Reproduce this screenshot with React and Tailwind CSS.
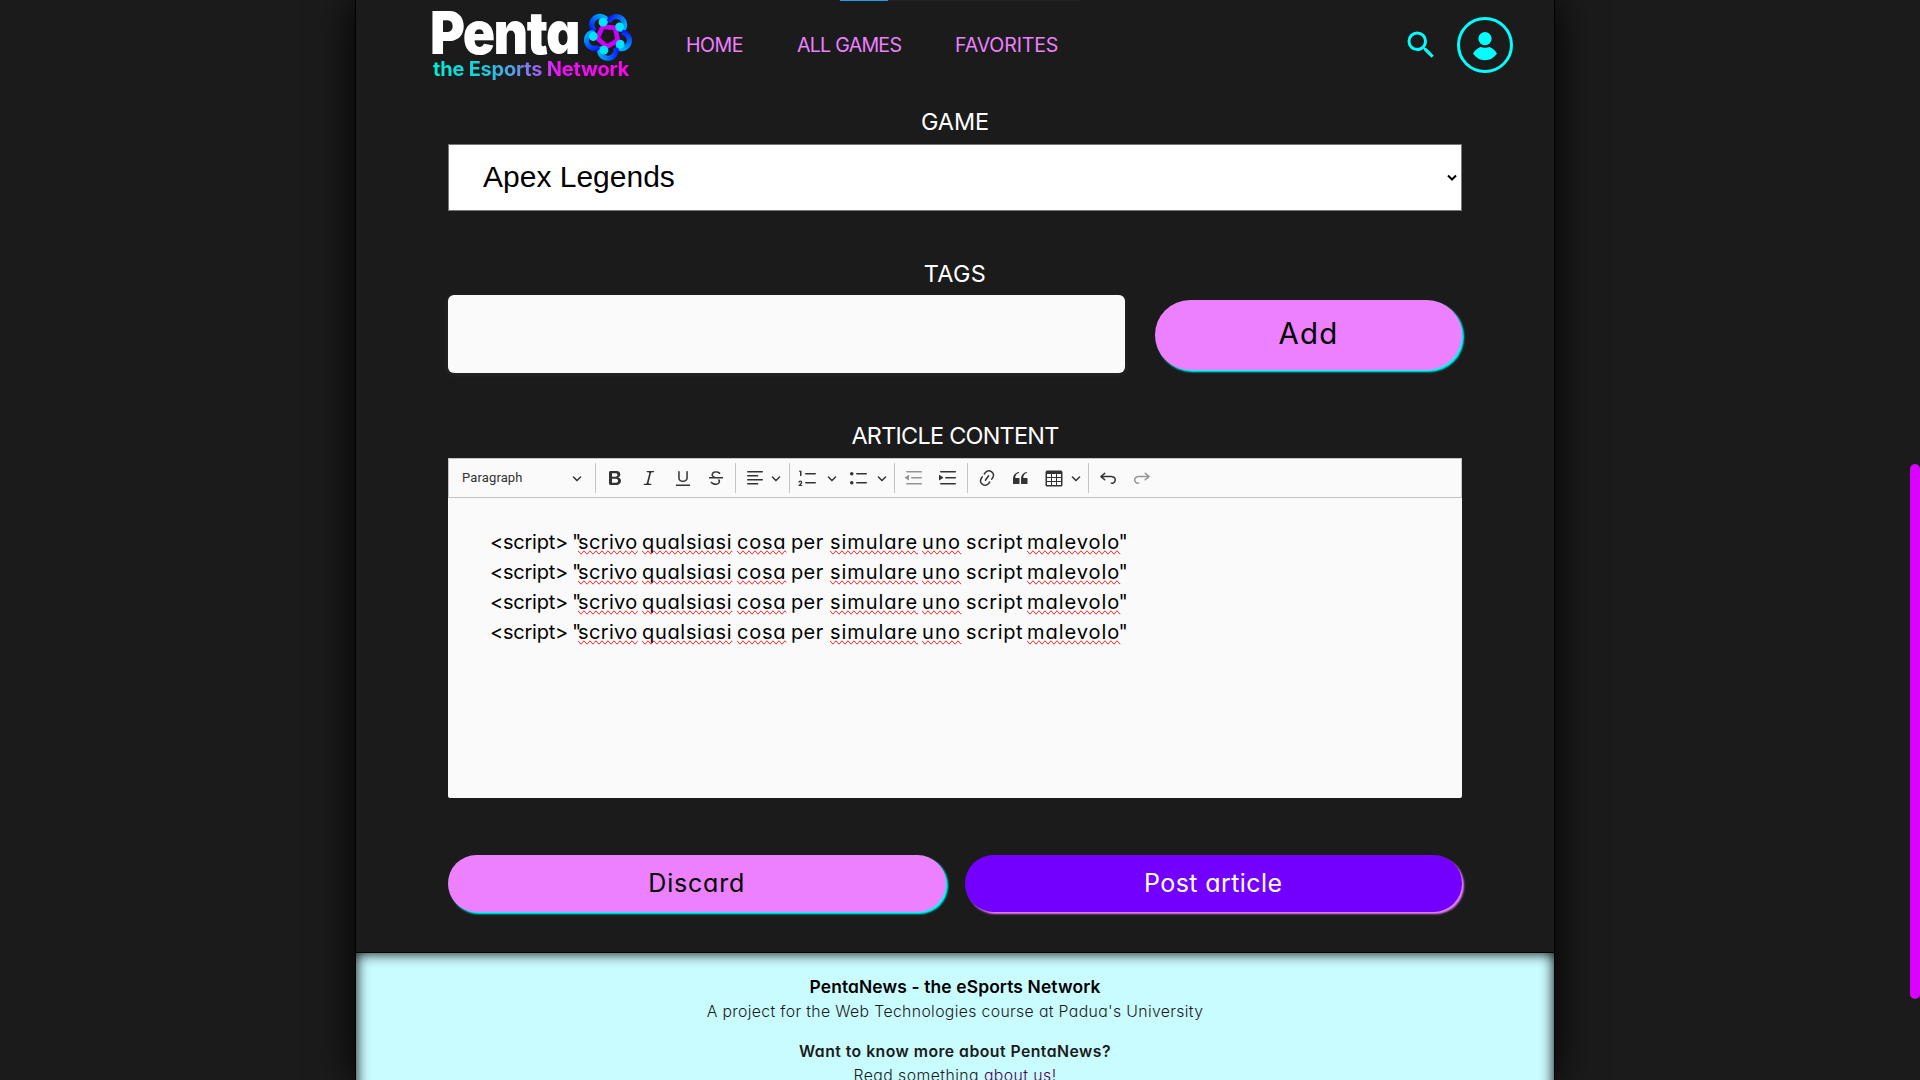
const ICONS = {
  bold: ["M10.187 17H5.773c-.637 0-1.092-.138-1.364-.415-.273-.277-.409-.718-.409-1.323V4.738c0-.617.14-1.062.419-1.332.279-.27.73-.406 1.354-.406h4.68c.69 0 1.288.041 1.793.124.506.083.96.242 1.36.477.341.197.644.447.906.75a3.262 3.262 0 0 1 .808 2.162c0 1.401-.722 2.426-2.167 3.075C15.05 10.175 16 11.315 16 13.01a3.756 3.756 0 0 1-2.296 3.504 6.1 6.1 0 0 1-1.517.377c-.571.073-1.238.11-2 .11zm-.217-6.217H7v4.087h3.069c1.977 0 2.965-.69 2.965-2.072 0-.707-.256-1.22-.768-1.537-.512-.319-1.277-.478-2.296-.478zM7 5.13v3.619h2.606c.729 0 1.292-.067 1.69-.2a1.6 1.6 0 0 0 .91-.765c.165-.267.247-.566.247-.897 0-.707-.26-1.176-.778-1.409-.519-.232-1.31-.348-2.375-.348H7z"],
  italic: ["m9.586 14.633.021.004c-.036.335.095.655.393.962.082.083.173.15.274.201h1.474a.6.6 0 1 1 0 1.2H5.304a.6.6 0 0 1 0-1.2h1.15c.474-.07.809-.182 1.005-.334.157-.122.291-.32.404-.597l2.416-9.55a1.053 1.053 0 0 0-.281-.823 1.12 1.12 0 0 0-.442-.296H8.15a.6.6 0 0 1 0-1.2h6.443a.6.6 0 1 1 0 1.2h-1.195c-.376.056-.65.155-.823.296-.215.175-.423.439-.623.79l-2.366 9.347z"],
  underline: ["M3 18v-1.5h14V18zm2.2-8V3.6c0-.4.4-.6.8-.6.3 0 .7.2.7.6v6.2c0 2 1.3 2.8 3.2 2.8 1.9 0 3.4-.9 3.4-2.9V3.6c0-.3.4-.5.8-.5.3 0 .7.2.7.5V10c0 2.7-2.2 4-4.9 4-2.6 0-4.7-1.2-4.7-4z"],
  strike: ["M7 16.4c-.8-.4-1.5-.9-2.2-1.5a.6.6 0 0 1-.2-.5l.3-.6h1c1 1.2 2.1 1.7 3.7 1.7 1 0 1.8-.3 2.3-.6.6-.4.6-1.2.6-1.3.2-1.2-.9-2.1-.9-2.1h2.1c.3.7.4 1.2.4 1.7v.8l-.6 1.2c-.6.8-1.1 1-1.6 1.2a6 6 0 0 1-2.4.6c-1 0-1.8-.3-2.5-.6zM6.8 9 6 8.3c-.4-.5-.5-.8-.5-1.6 0-.7.1-1.3.5-1.8.4-.6 1-1 1.6-1.3a6.3 6.3 0 0 1 4.7 0 4 4 0 0 1 1.7 1l.3.7c0 .1.2.4-.2.7-.4.2-.9.1-1 0a3 3 0 0 0-1.2-1c-.4-.2-1-.3-2-.4-.7 0-1.4.2-2 .6-.8.6-1 .8-1 1.5 0 .8.5 1 1.2 1.5.6.4 1.1.7 1.9 1H6.8z", "M3 10.5V9h14v1.5z"],
  align: ["M2 3.75c0 .414.336.75.75.75h14.5a.75.75 0 1 0 0-1.5H2.75a.75.75 0 0 0-.75.75zm0 8c0 .414.336.75.75.75h14.5a.75.75 0 1 0 0-1.5H2.75a.75.75 0 0 0-.75.75zm0 4c0 .414.336.75.75.75h9.929a.75.75 0 1 0 0-1.5H2.75a.75.75 0 0 0-.75.75zm0-8c0 .414.336.75.75.75h9.929a.75.75 0 1 0 0-1.5H2.75a.75.75 0 0 0-.75.75z"],
  numbered: ["M7 5.75c0 .414.336.75.75.75h9.5a.75.75 0 1 0 0-1.5h-9.5a.75.75 0 0 0-.75.75zM3.5 3v5H2V3.7H1v-1h2.5V3zM.343 17.857l2.59-3.257H2.92a.6.6 0 1 0-1.04 0H.302a2 2 0 1 1 3.995 0h-.001c-.048.405-.16.734-.333.988-.175.254-.59.692-1.244 1.312H4.3v1h-4l.043-.043zM7 14.75a.75.75 0 0 1 .75-.75h9.5a.75.75 0 1 1 0 1.5h-9.5a.75.75 0 0 1-.75-.75z"],
  bulleted: ["M7 5.75c0 .414.336.75.75.75h9.5a.75.75 0 1 0 0-1.5h-9.5a.75.75 0 0 0-.75.75zm-6 0C1 4.784 1.777 4 2.75 4c.966 0 1.75.777 1.75 1.75 0 .966-.777 1.75-1.75 1.75C1.784 7.5 1 6.723 1 5.75zm6 9c0 .414.336.75.75.75h9.5a.75.75 0 1 0 0-1.5h-9.5a.75.75 0 0 0-.75.75zm-6 0c0-.966.777-1.75 1.75-1.75.966 0 1.75.777 1.75 1.75 0 .966-.777 1.75-1.75 1.75-.966 0-1.75-.777-1.75-1.75z"],
  outdent: ["M2 3.75c0 .414.336.75.75.75h14.5a.75.75 0 1 0 0-1.5H2.75a.75.75 0 0 0-.75.75zm5 6c0 .414.336.75.75.75h9.5a.75.75 0 1 0 0-1.5h-9.5a.75.75 0 0 0-.75.75zM2.75 16.5h14.5a.75.75 0 1 0 0-1.5H2.75a.75.75 0 1 0 0 1.5zm1.618-9.55L.98 9.358a.4.4 0 0 0 .013.661l3.39 2.207A.4.4 0 0 0 5 11.892V7.275a.4.4 0 0 0-.632-.326z"],
  indent: ["M2 3.75c0 .414.336.75.75.75h14.5a.75.75 0 1 0 0-1.5H2.75a.75.75 0 0 0-.75.75zm5 6c0 .414.336.75.75.75h9.5a.75.75 0 1 0 0-1.5h-9.5a.75.75 0 0 0-.75.75zM2.75 16.5h14.5a.75.75 0 1 0 0-1.5H2.75a.75.75 0 1 0 0 1.5zM1.632 6.95 5.02 9.358a.4.4 0 0 1-.013.661l-3.39 2.207A.4.4 0 0 1 1 11.892V7.275a.4.4 0 0 1 .632-.326z"],
  link: ["m11.077 15 .991-1.416a.75.75 0 1 1 1.229.86l-1.148 1.64a.748.748 0 0 1-.217.206 5.251 5.251 0 0 1-8.503-5.955.741.741 0 0 1 .12-.274l1.147-1.639a.75.75 0 1 1 1.228.86L4.933 10.7l.006.003a3.75 3.75 0 0 0 6.132 4.294l.006.004zm5.494-5.335a.748.748 0 0 1-.12.274l-1.147 1.639a.75.75 0 1 1-1.228-.86l.86-1.23a3.75 3.75 0 0 0-6.144-4.301l-.86 1.229a.75.75 0 0 1-1.229-.86l1.148-1.64a.748.748 0 0 1 .217-.206 5.251 5.251 0 0 1 8.503 5.955zm-4.563-2.532a.75.75 0 0 1 .184 1.045l-3.155 4.505a.75.75 0 1 1-1.229-.86l3.155-4.506a.75.75 0 0 1 1.045-.184z"],
  quote: ["M3 10.423a6.5 6.5 0 0 1 6.056-6.408l.038.67C6.448 5.423 5.354 7.663 5.22 10H9c.552 0 .5.432.5.986v4.511c0 .554-.448.503-1 .503h-5c-.552 0-.5-.449-.5-1.003v-4.574zm8 0a6.5 6.5 0 0 1 6.056-6.408l.038.67c-2.646.739-3.74 2.979-3.873 5.315H17c.552 0 .5.432.5.986v4.511c0 .554-.448.503-1 .503h-5c-.552 0-.5-.449-.5-1.003v-4.574z"],
  table: ["M3 6v3h4V6H3zm0 4v3h4v-3H3zm0 4v3h4v-3H3zm5 3h4v-3H8v3zm5 0h4v-3h-4v3zm4-4v-3h-4v3h4zm0-4V6h-4v3h4zm1.5 8a1.5 1.5 0 0 1-1.5 1.5H3A1.5 1.5 0 0 1 1.5 17V4c.222-.863 1.068-1.5 2-1.5h13c.932 0 1.778.637 2 1.5v13zM12 13v-3H8v3h4zm0-4V6H8v3h4z"],
  undo: ["m5.042 9.367 2.189 1.837a.75.75 0 0 1-.965 1.149l-3.788-3.18a.747.747 0 0 1-.21-.284.75.75 0 0 1 .17-.945L6.23 4.762a.75.75 0 1 1 .964 1.15L4.863 7.866h8.917A.75.75 0 0 1 14 7.9a4 4 0 1 1-1.477 7.718l.344-1.489a2.5 2.5 0 1 0 1.094-4.73l.008-.032H5.042z"],
};

const Icon = ({ name, className = "" }) => (
  <svg viewBox="0 0 20 20" fill="currentColor" fillRule="evenodd" className={`size-5 shrink-0 ${className}`}>
    {ICONS[name].map((d) => <path key={d} d={d} />)}
  </svg>
);

const Arrow = ({ className = "" }) => (
  <svg viewBox="0 0 10 10" fill="currentColor" className={`size-[10px] shrink-0 ${className}`}>
    <path d="M.941 4.523a.75.75 0 1 1 1.06-1.06l3.006 3.005 3.005-3.005a.75.75 0 1 1 1.06 1.06l-3.549 3.55a.75.75 0 0 1-1.168-.136L.941 4.523z" />
  </svg>
);

const Separator = ({ className = "" }) => <span className={`h-[30px] w-px shrink-0 bg-[#c4c4c4] ${className}`} />;

function Toolbar() {
  return (
    <div className="flex h-10 items-center border border-[#c4c4c4] bg-[#fafafa] text-[#333]">
      <div className="flex w-[146px] shrink-0 items-center justify-between pr-[13px] pl-[13px] font-['Roboto',sans-serif] text-[13px] leading-none tracking-[0.01em]">
        <span className="mb-[2px]">Paragraph</span>
        <Arrow />
      </div>
      <Separator />
      <Icon name="bold" className="ml-[9px]" />
      <Icon name="italic" className="ml-[14px]" />
      <Icon name="underline" className="ml-[14px]" />
      <Icon name="strike" className="ml-[13px]" />
      <Separator className="ml-[9px]" />
      <Icon name="align" className="ml-[9px]" />
      <Arrow className="ml-[6px]" />
      <Separator className="ml-[8px]" />
      <Icon name="numbered" className="ml-[8px]" />
      <Arrow className="ml-[9px]" />
      <Icon name="bulleted" className="ml-[12px]" />
      <Arrow className="ml-[8px]" />
      <Separator className="ml-[7px]" />
      <Icon name="outdent" className="ml-[9px] opacity-50" />
      <Icon name="indent" className="ml-[14px]" />
      <Separator className="ml-[9px]" />
      <Icon name="link" className="ml-[9px]" />
      <Icon name="quote" className="ml-[13px]" />
      <Icon name="table" className="ml-[14px]" />
      <Arrow className="ml-[7px]" />
      <Separator className="ml-[7px]" />
      <Icon name="undo" className="ml-[9px]" />
      <Icon name="undo" className="ml-[14px] -scale-x-100 opacity-50" />
    </div>
  );
}

const WORDS = [
  { text: "<script>", box: "w-[82px] tracking-[-0.012em]" },
  { text: '"', box: "w-[6px]" },
  { text: "scrivo", box: "w-[64px] tracking-[0.018em]", typo: true },
  { text: "qualsiasi", box: "w-[95px] tracking-[0.034em]", typo: true },
  { text: "cosa", box: "w-[54px] tracking-[0.04em]", typo: true },
  { text: "per", box: "w-[39px] tracking-[0.018em]" },
  { text: "simulare", box: "w-[92px] tracking-[0.046em]", typo: true },
  { text: "uno", box: "w-[44px] tracking-[0.06em]", typo: true },
  { text: "script", box: "w-[61px] tracking-[0.032em]" },
  { text: "malevolo", box: "w-[91.5px] tracking-[0.048em]", typo: true },
  { text: '"', box: "w-[6px]" },
];

const EditorLine = () => (
  <p className="flex h-[30px] text-[20px] leading-[30px] font-[375] whitespace-pre text-black">
    {WORDS.map((w, i) => (
      <span key={i} className={`shrink-0 ${w.box}`}>
        <span className={w.typo ? "[text-decoration-line:spelling-error]" : ""}>{w.text}</span>
      </span>
    ))}
  </p>
);

const PETALS = [-36, 36, 108, 180, 252];

const Flower = () => (
  <svg viewBox="-24.3 -24.3 48.6 48.6" className="size-[50px]" fill="none">
    <defs>
      <linearGradient id="petal" gradientUnits="userSpaceOnUse" x1="-9" y1="-12" x2="9" y2="-15">
        <stop offset="0" stopColor="#0a1eff" />
        <stop offset="0.5" stopColor="#0068ff" />
        <stop offset="1" stopColor="#00aaff" />
      </linearGradient>
    </defs>
    <path d="M-5.2 -9.1L7 -7.8L9.6 4.3L-1.1 10.4L-10.3 2.2Z" stroke="#c800ff" strokeWidth="4.6" strokeLinejoin="round" />
    {PETALS.map((a) => (
      <path key={a} transform={`rotate(${a})`} d="M-7.6 -11.6A8 8 0 1 1 8 -15.5C8 -12.6 6 -12 4.4 -12.4" stroke="url(#petal)" strokeWidth="5" />
    ))}
    {PETALS.map((a) => (
      <circle key={a} transform={`rotate(${a})`} cx="4" cy="-13.8" r="4.3" fill="#00e5ff" />
    ))}
  </svg>
);

const Logo = () => (
  <div className="relative h-[90px] w-[205px] shrink-0">
    <div className="absolute top-[11px] left-[-3px] origin-left scale-x-[0.905] text-[59px] leading-[43px] font-black tracking-[-0.03em] text-white">Penta</div>
    <div className="absolute top-[11px] left-[150px]"><Flower /></div>
    <div className="absolute top-[57px] left-0 bg-[linear-gradient(75deg,#00f0dc_0%,#12d4dc_24%,#5a9ae8_42%,#a060f0_54%,#f010f8_64%,#ff00f0_100%)] bg-clip-text text-[19.9px] leading-[24px] font-bold tracking-[-0.008em] whitespace-nowrap text-transparent">
      the Esports Network
    </div>
  </div>
);

const Label = ({ className, children }) => (
  <div className={`flex items-center justify-center text-[23.4px] leading-none text-white ${className}`}>{children}</div>
);

export default function App() {
  return (
    <div className="flex h-[1080px] w-[1920px] overflow-hidden bg-[#1b1b1b] font-['Inter','Open_Sans',sans-serif] [font-feature-settings:'cv11']">
      <div className="ml-[355px] flex h-full w-[1200px] flex-col border-x border-black bg-[#1b1b1b] shadow-[0_0_38px_#000]">
        <header className="relative flex h-[90px] shrink-0 items-center pl-[77px]">
          <div className="absolute top-0 left-[484px] h-px w-[241px] bg-[#222]">
            <div className="h-px w-12 bg-[#1d9bf0]" />
          </div>
          <Logo />
          <nav className="mt-[2px] ml-[48px] flex flex-1 items-center text-[19.6px] leading-none text-[#ed80ff]">
            <a className="w-[111px] tracking-[-0.026em]">HOME</a>
            <a className="w-[158px] tracking-[-0.038em]">ALL GAMES</a>
            <a className="tracking-[-0.008em]">FAVORITES</a>
          </nav>
          <svg viewBox="0 0 24 24" className="mr-[18px] size-9" fill="#00ffff">
            <path d="M15.5 14h-.79l-.28-.27A6.471 6.471 0 0 0 16 9.5 6.5 6.5 0 1 0 9.5 16c1.61 0 3.09-.59 4.23-1.57l.27.28v.79l5 4.99L20.49 19l-4.99-5zm-6 0C7.01 14 5 11.99 5 9.5S7.01 5 9.5 5 14 7.01 14 9.5 11.99 14 9.5 14z" />
          </svg>
          <svg viewBox="0 0 56 56" className="mr-[41px] size-14" fill="#00ffff">
            <circle cx="28" cy="28" r="26.5" fill="none" stroke="#00ffff" strokeWidth="3" />
            <circle cx="28" cy="21.6" r="6.6" />
            <path d="M23.5 30C26 31 30 31 32.5 30Q37 31.5 40 36.6Q35.5 43.3 28 43.3T16 36.6Q19 31.5 23.5 30Z" />
          </svg>
        </header>

        <main className="flex flex-col pr-[92px] pl-[92px]">
          <Label className="mt-[10px] h-11 tracking-[-0.003em]">GAME</Label>
          <div className="flex h-[67px] items-center justify-between border border-[#767676] bg-white pr-[3px] pl-[34px]">
            <span className="mb-[1px] font-['Liberation_Sans',Arial,sans-serif] text-[30px] leading-none text-black">Apex Legends</span>
            <svg viewBox="0 0 12 8" className="h-2 w-3" fill="none" stroke="#000" strokeWidth="2">
              <path d="M2 1.5L6 5.5L10 1.5" />
            </svg>
          </div>

          <Label className="mt-[41px] h-[43px] tracking-[0.016em]">TAGS</Label>
          <div className="flex h-[78px]">
            <div className="h-full w-[677px] shrink-0 rounded-[6px] bg-[#fafafa] shadow-[0_2px_6px_#ffffff10]" />
            <button className="mt-[5px] ml-[30px] flex h-[69.5px] w-[307px] shrink-0 items-center justify-center rounded-full bg-[#ed80ff] pb-[3px] text-[29.4px] leading-none font-[375] tracking-[0.045em] text-black shadow-[2px_2px_2px_#00ffff]">
              Add
            </button>
          </div>

          <Label className="mt-[40px] h-[45px] tracking-[-0.031em]">ARTICLE CONTENT</Label>
          <Toolbar />
          <div className="h-[300px] rounded-b-[2px] bg-[#fafafa] pt-[29px] pl-[42px]">
            <EditorLine />
            <EditorLine />
            <EditorLine />
            <EditorLine />
          </div>

          <div className="mt-[57px] flex h-[57px] gap-[19px]">
            <button className="w-[498px] rounded-full bg-[#ed80ff] text-[25px] leading-none font-[375] tracking-[0.032em] text-black shadow-[2px_2px_2px_#00ffff]">Discard</button>
            <button className="w-[498px] rounded-full bg-[#7300ff] text-[25px] leading-none tracking-[0.016em] text-white shadow-[2px_2px_2px_#ed80ff]">Post article</button>
          </div>
        </main>

        <footer className="mt-[40px] flex h-[168px] shrink-0 flex-col items-center border-t border-black bg-[#c9fcff] pt-[22px] leading-6 text-[#1b1b1b] shadow-[inset_0_0_14px_#000]">
          <h2 className="text-[17.4px] font-semibold tracking-[0.008em] text-black">PentaNews - the eSports Network</h2>
          <p className="mt-[1px] text-[15.8px] font-light tracking-[0.022em]">A project for the Web Technologies course at Padua's University</p>
          <h3 className="mt-4 text-[15.8px] font-semibold tracking-[0.029em]">Want to know more about PentaNews?</h3>
          <p className="text-[15.8px] font-light tracking-[0.028em]">
            Read something <a className="text-[#4b0055]">about us!</a>
          </p>
        </footer>
      </div>
      <div className="mt-[464px] ml-auto h-[535px] w-[10px] rounded-full bg-[#d900ff]" />
    </div>
  );
}
